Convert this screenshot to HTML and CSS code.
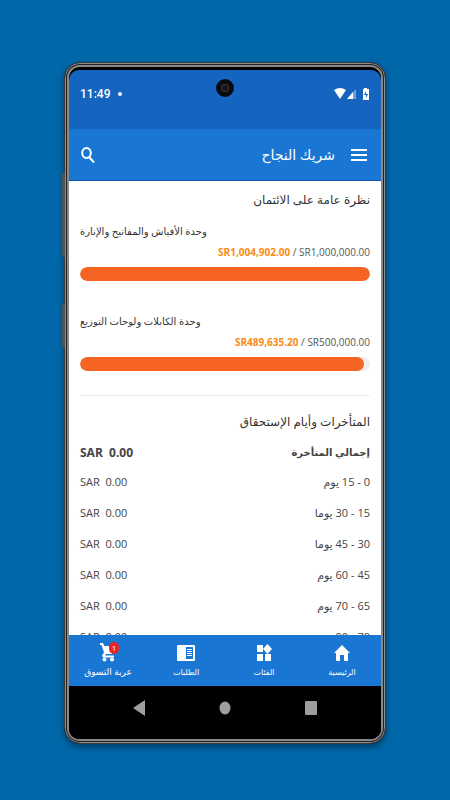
FILE: index.html
```
<!DOCTYPE html>
<html lang="ar" dir="rtl">
<head>
    <meta charset="UTF-8">
    <meta name="viewport" content="width=device-width, initial-scale=1.0">
    <title>شريك النجاح</title>
    <link rel="stylesheet" href="styles.css">
</head>
<body>
    <div class="phone">
        <span class="side-key power"></span>
        <span class="side-key volume"></span>
        <div class="screen">
            <div class="status-bar" dir="ltr">
                <span class="clock">11:49</span>
                <span class="dot"></span>
                <span class="camera"></span>
                <svg class="status-icons" viewBox="0 0 36 14" width="36" height="14">
                    <path d="M0 3Q6 -1 12 3L6 12Z" fill="#fff"/>
                    <path d="M13 12L22 2V12Z" fill="#6f9fdc"/>
                    <path d="M13 12L19 5V12Z" fill="#fff"/>
                    <path d="M30 1h3v1h2v11h-6V2h1z" fill="#fff"/>
                    <path d="M32 4l-2 4h2v3l2-4h-2z" fill="#1565c0"/>
                </svg>
            </div>

            <header class="app-bar">
                <button class="icon-btn" aria-label="القائمة">
                    <svg viewBox="0 0 16 12" width="16" height="12"><path d="M0 1h16M0 6h16M0 11h16" stroke="#fff" stroke-width="2"/></svg>
                </button>
                <h1>شريك النجاح</h1>
                <button class="icon-btn search" aria-label="بحث">
                    <svg viewBox="0 0 14 16" width="14" height="16" fill="none" stroke="#fff" stroke-width="2"><ellipse cx="5.500" cy="6" rx="4.300" ry="5"/><path d="M8 10l5 5.500"/></svg>
                </button>
            </header>

            <main>
                <!-- Credit -->
                <section class="credit">
                    <h2>نظرة عامة على الائتمان</h2>
                    <div class="unit">
                        <h3>وحدة الأفياش والمفاتيح والإنارة</h3>
                        <p class="amount" dir="ltr"><b>SR1,004,902.00</b> / SR1,000,000.00</p>
                        <div class="bar" dir="ltr"><div class="fill" style="width: 100%"></div></div>
                    </div>
                    <div class="unit">
                        <h3>وحدة الكابلات ولوحات التوزيع</h3>
                        <p class="amount" dir="ltr"><b>SR489,635.20</b> / SR500,000.00</p>
                        <div class="bar" dir="ltr"><div class="fill" style="width: 98%"></div></div>
                    </div>
                </section>

                <!-- Overdue -->
                <section class="overdue">
                    <h2>المتأخرات وأيام الإستحقاق</h2>
                    <table>
                        <tr class="total"><th>إجمالي المتأخرة</th><td dir="ltr">SAR&nbsp; 0.00</td></tr>
                        <tr><th>0 - 15 يوم</th><td dir="ltr">SAR&nbsp; 0.00</td></tr>
                        <tr><th>15 - 30 يوما</th><td dir="ltr">SAR&nbsp; 0.00</td></tr>
                        <tr><th>30 - 45 يوما</th><td dir="ltr">SAR&nbsp; 0.00</td></tr>
                        <tr><th>45 - 60 يوم</th><td dir="ltr">SAR&nbsp; 0.00</td></tr>
                        <tr><th>65 - 70 يوم</th><td dir="ltr">SAR&nbsp; 0.00</td></tr>
                        <tr><th>70 - 90 يوم</th><td dir="ltr">SAR&nbsp; 0.00</td></tr>
                    </table>
                </section>
            </main>

            <nav class="tabs">
                <a href="#">
                    <svg viewBox="0 0 18 18" width="18" height="18"><path d="M9 1L1 9h2v8h4v-6h4v6h4V9h2z" fill="#fff"/></svg>
                    الرئيسية
                </a>
                <a href="#">
                    <svg viewBox="0 0 18 18" width="18" height="18" fill="#fff"><path d="M2 1h6v7H2zM2 10h6v7H2zM10 10h6v7h-6zM12.500 0L17 5l-4.500 5L8 5z"/></svg>
                    الفئات
                </a>
                <a href="#">
                    <svg viewBox="0 0 18 18" width="18" height="18"><rect y="1" width="18" height="16" rx="1" fill="#fff"/><path d="M9 3h7v12H9z" fill="#1976d2"/><path d="M10 5.500h5M10 7.500h5M10 9.500h5M10 11.500h5" stroke="#fff"/></svg>
                    الطلبات
                </a>
                <a href="#" class="cart">
                    <span class="cart-icon">
                        <svg viewBox="0 0 18 20" width="18" height="20" fill="#fff"><path d="M1 1h3l1.500 3H16l-3 8H7l-1 1.500h9v2H4l-1-2 2-3L2.500 3H1z"/><circle cx="5.500" cy="17.500" r="2"/><circle cx="13" cy="17.500" r="2"/></svg>
                        <span class="badge">1</span>
                    </span>
                    عربة التسوق
                </a>
            </nav>

            <div class="system-bar" dir="ltr">
                <button aria-label="رجوع"><svg viewBox="0 0 12 16" width="12" height="16"><path d="M0 8L12 0v16z" fill="#9e9e9e"/></svg></button>
                <button aria-label="الشاشة الرئيسية"><svg viewBox="0 0 12 14" width="12" height="14"><ellipse cx="6" cy="7" rx="5.500" ry="6.500" fill="#9e9e9e"/></svg></button>
                <button aria-label="التطبيقات"><svg viewBox="0 0 12 14" width="12" height="14"><rect width="12" height="14" rx="1" fill="#9e9e9e"/></svg></button>
            </div>
        </div>
    </div>
</body>
</html>
```
FILE: styles.css
```
* {
    box-sizing: border-box;
}

body {
    margin: 0;
    height: 100vh;
    padding: 62px 64px 56px;
    background: #0067a9;
    font-family: "Open Sans", "Noto Sans", "DejaVu Sans", sans-serif;
    color: #333;
}

h1, h2, h3, p {
    margin: 0;
    font-weight: 400;
}

button {
    padding: 0;
    border: none;
    background: none;
    cursor: pointer;
}

svg {
    display: block;
}

/* phone frame */
.phone {
    position: relative;
    height: 100%;
    padding: 7px 4px 4px;
    border: 1px solid #3a3a3a;
    border-radius: 16px;
    background: #000;
    box-shadow: inset 0 0 0 1px #8c8c8c, inset 0 0 0 2px #222, inset 0 0 0 4px #8a8888, 0 3px 6px rgba(0,0,0,0.4);
}

.side-key {
    position: absolute;
    left: -3px;
    width: 3px;
    background: #4d5559;
    border-radius: 2px 0 0 2px;
}

.power {
    top: 110px;
    height: 84px;
}

.volume {
    top: 241px;
    height: 44px;
}

.screen {
    display: flex;
    flex-direction: column;
    height: 100%;
    overflow: hidden;
    background: #000;
    border-radius: 10px;
}

.status-bar {
    position: relative;
    display: flex;
    align-items: center;
    flex: none;
    height: 59px;
    padding: 0 11px 12px;
    background: #1565c0;
    color: #fff;
}

.clock {
    font: 500 12px Roboto, sans-serif;
}

.dot {
    width: 4px;
    height: 4px;
    margin-left: 8px;
    border-radius: 50%;
    background: #fff;
}

.camera {
    position: absolute;
    top: 9px;
    left: 50%;
    width: 18px;
    height: 18px;
    margin-left: -9px;
    border: 5px solid #0b0b0f;
    border-radius: 50%;
    background: radial-gradient(#111 30%, #555);
}

.status-icons {
    margin-left: auto;
}

.app-bar {
    display: flex;
    align-items: center;
    flex: none;
    height: 52px;
    padding: 0 14px 0 12px;
    background: #1976d2;
    border-bottom: 1px solid #0d55a8;
    color: #fff;
}

.app-bar h1 {
    margin-right: 16px;
    font-size: 14px;
}

.search {
    margin-right: auto;
}

main {
    flex: 1;
    min-height: 0;
    overflow: hidden;
    padding: 0 11px;
    background: #fff;
}

h2 {
    font-size: 12px;
    line-height: 38px;
}

.credit {
    padding-bottom: 24px;
    border-bottom: 1px solid #eee;
}

.unit + .unit {
    margin-top: 28px;
}

.unit h3 {
    font-size: 10px;
    line-height: 24px;
    text-align: left;
}

.amount {
    font-size: 10px;
    line-height: 18px;
    text-align: right;
    color: #555;
}

.amount b {
    color: #f98b13;
}

.bar {
    height: 14px;
    margin-top: 6px;
    border-radius: 7px;
    background: #eee;
    overflow: hidden;
}

.fill {
    height: 100%;
    border-radius: 7px;
    background: #f56423;
}

.overdue {
    padding-top: 10px;
}

.overdue h2 {
    line-height: 32px;
}

table {
    width: 100%;
    border-collapse: collapse;
    font-size: 11px;
    color: #444;
}

tr {
    height: 31px;
}

th, td {
    padding: 0;
    font-weight: 400;
    text-align: right;
}

td {
    text-align: left;
}

.total {
    height: 28px;
}

.total th {
    font-size: 10px;
    font-weight: 700;
}

.total td {
    font-size: 12px;
    font-weight: 700;
}

.tabs {
    display: flex;
    flex: none;
    height: 51px;
    background: #1976d2;
}

.tabs a {
    display: flex;
    flex: 1;
    flex-direction: column;
    align-items: center;
    padding-top: 9px;
    gap: 3px;
    color: #fff;
    font-size: 8px;
    line-height: 14px;
    text-decoration: none;
}

.tabs .cart {
    padding-top: 7px;
    font-size: 9px;
}

.cart-icon {
    position: relative;
}

.badge {
    position: absolute;
    top: 0;
    right: -2px;
    width: 10px;
    height: 12px;
    border-radius: 6px;
    background: #e5252a;
    font-size: 8px;
    line-height: 12px;
    text-align: center;
}

.system-bar {
    display: flex;
    flex: none;
    align-items: center;
    justify-content: center;
    gap: 74px;
    height: 53px;
    padding-bottom: 10px;
    background: #000;
}
```
